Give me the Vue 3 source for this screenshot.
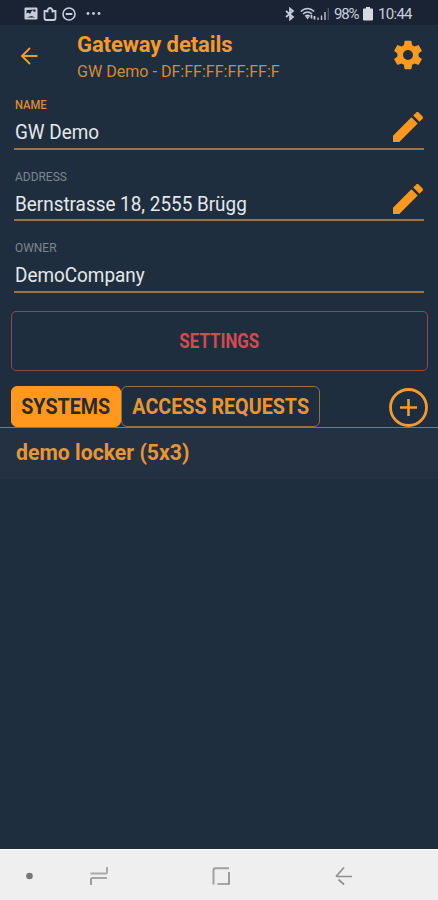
<template>
  <div class="screen">
    <div class="status">
      <div class="status-left">
        <svg width="14" height="14" viewBox="0 0 14 14">
          <path fill="#c9cedb" fill-rule="evenodd" d="M1.500 .5h11a1 1 0 0 1 1 1v10a1 1 0 0 1-1 1h-11a1 1 0 0 1-1-1v-10a1 1 0 0 1 1-1zM2.500 3v3.500l2-1 1.500 1.500 2-3.500h1.500V5l2-.5V2.500zM2.500 10.500h9l-4-1.500z" />
        </svg>
        <svg width="14" height="14" viewBox="0 0 14 14" fill="none" stroke="#c9cedb" stroke-width="1.800">
          <path d="M4 4H1.500v7q0 2 2 2h7q2 0 2-2V4H10M4.500 5.500V3Q7-1 9.500 3v2.500" />
        </svg>
        <svg width="14" height="14" viewBox="0 0 14 14" fill="none" stroke="#c9cedb" stroke-width="1.600">
          <circle cx="7" cy="7" r="6" />
          <path d="M3.700 7h6.600" stroke-width="2" />
        </svg>
        <svg class="dots" width="16" height="14" viewBox="0 0 16 14" fill="#c9cedb">
          <circle cx="2" cy="6.500" r="1.400" />
          <circle cx="7.500" cy="6.500" r="1.400" />
          <circle cx="13" cy="6.500" r="1.400" />
        </svg>
      </div>
      <div class="status-right">
        <svg width="10" height="14" viewBox="0 0 10 14" fill="none" stroke="#c9cedb" stroke-width="1.700">
          <path d="M1 4l7 6L5 12.500v-11L8 4 1 10" />
        </svg>
        <svg class="wifi" width="17" height="14" viewBox="0 0 17 14" fill="none" stroke="#c9cedb" stroke-width="1.600">
          <path d="M.8 4.500Q7.500-1.500 14.200 4.500M3 7q4.500-4 9 0M5.200 9.300q2.300-2 4.600 0" />
          <path d="M5.500 9.500h4L7.500 12.500z" fill="#c9cedb" stroke="none" />
          <path d="M11.500 8v3.500M14.500 9v3.500" stroke-width="1.800" />
        </svg>
        <svg class="signal" width="12" height="14" viewBox="0 0 12 14" fill="none" stroke="#c9cedb" stroke-width="1.300">
          <path d="M1 13v-2.500M4.500 13V8.500M8 13V5" />
          <path d="M11.300 13V1" stroke="#525a6b" />
        </svg>
        <span class="battery-text">98%</span>
        <svg class="battery" width="10" height="14" viewBox="0 0 10 14">
          <path d="M3 0h4v1.500h2q1 0 1 1V12.500q0 1-1 1H1q-1 0-1-1V2.500q0-1 1-1h2z" fill="#d5d9e3" />
        </svg>
        <span class="clock">10:44</span>
      </div>
    </div>

    <header class="header">
      <svg class="back" width="18" height="18" viewBox="0 0 18 18" fill="none" stroke="#f79a26" stroke-width="1.900">
        <path d="M17.500 9H1.800M10 1L2 9l8 8" />
      </svg>
      <div class="titles">
        <div class="title"><span>Gateway details</span></div>
        <div class="subtitle"><span>GW Demo - DF:FF:FF:FF:FF:F</span></div>
      </div>
      <svg class="gear" width="34" height="34" viewBox="0 0 24 24" fill="#f99a20">
        <path d="M19.430 12.980c.04-.32.07-.64.07-.98s-.03-.66-.07-.98l2.110-1.650c.19-.15.24-.42.12-.64l-2-3.460c-.12-.22-.39-.3-.61-.22l-2.490 1c-.52-.4-1.080-.73-1.690-.98l-.38-2.650C14.460 2.180 14.250 2 14 2h-4c-.25 0-.46.18-.49.42l-.38 2.650c-.61.25-1.170.59-1.690.98l-2.490-1c-.23-.09-.49 0-.61.22l-2 3.460c-.13.22-.07.49.12.64l2.110 1.650c-.04.32-.07.65-.07.98s.03.66.07.98l-2.110 1.650c-.19.15-.24.42-.12.64l2 3.460c.12.22.39.3.61.22l2.490-1c.52.4 1.080.73 1.690.98l.38 2.650c.03.24.24.42.49.42h4c.25 0 .46-.18.49-.42l.38-2.650c.61-.25 1.170-.59 1.690-.98l2.490 1c.23.09.49 0 .61-.22l2-3.460c.12-.22.07-.49-.12-.64l-2.110-1.650zM12 15.500c-1.930 0-3.500-1.570-3.500-3.500s1.570-3.500 3.500-3.500 3.500 1.570 3.500 3.500-1.570 3.500-3.500 3.500z" />
      </svg>
    </header>

    <section class="fields">
      <div v-for="field in fields" :key="field.id" class="field" :class="field.id">
        <div class="text">
          <div class="label"><span>{{ field.label }}</span></div>
          <div class="value"><span>{{ field.value }}</span></div>
        </div>
        <svg v-if="field.editable" class="pencil" width="40" height="40" viewBox="0 0 24 24" fill="#ff981c">
          <path d="M3 17.250V21h3.750L17.810 9.940l-3.750-3.750L3 17.250zM20.710 7.040c.39-.39.39-1.020 0-1.410l-2.340-2.340c-.39-.39-1.020-.39-1.410 0l-1.830 1.830 3.750 3.750 1.830-1.830z" />
        </svg>
      </div>
    </section>

    <button class="settings" type="button"><span>SETTINGS</span></button>

    <nav class="tabs">
      <button
        v-for="tab in tabs"
        :key="tab.id"
        type="button"
        class="tab"
        :class="[tab.id, { active: tab.id === activeTab }]"
        @click="activeTab = tab.id"
      >
        <span>{{ tab.label }}</span>
      </button>
      <svg class="add" width="40" height="40" viewBox="0 0 40 40" fill="none" stroke="#f39a30">
        <circle cx="19.500" cy="20.500" r="18" stroke-width="2.800" />
        <path d="M19.500 12v17M11 20.500h17" stroke-width="2.600" />
      </svg>
    </nav>

    <main class="list">
      <div class="row"><span>demo locker (5x3)</span></div>
    </main>

    <footer class="navbar">
      <svg width="438" height="50" viewBox="0 0 438 50" fill="none" stroke="#8f8f8f" stroke-width="1.700">
        <circle cx="29.500" cy="26" r="3.300" fill="#777" stroke="none" />
        <path d="M90.500 23.500h15.200q1.300 0 1.300-1.300V17" stroke="#aaa" stroke-width="2" />
        <path d="M107 28H92.300q-1.300 0-1.300 1.300V35" />
        <path d="M229 18.300h-13.500q-2 0-2 2V34.500" stroke="#a0a0a0" stroke-width="2" />
        <path d="M229 22v12h-11.500" />
        <path d="M352 26.500h-15.500M344 17.500L336 26.500M338.500 29.500l5.500 5" />
      </svg>
    </footer>
  </div>
</template>

<script setup>
import { ref } from 'vue';

const fields = [
  { id: 'name', label: 'NAME', value: 'GW Demo', editable: true },
  { id: 'address', label: 'ADDRESS', value: 'Bernstrasse 18, 2555 Brügg', editable: true },
  { id: 'owner', label: 'OWNER', value: 'DemoCompany', editable: false },
];

const tabs = [
  { id: 'systems', label: 'SYSTEMS' },
  { id: 'requests', label: 'ACCESS REQUESTS' },
];

const activeTab = ref('systems');
</script>

<style>
  body {
    margin: 0;
    background: #1f2e3e;
  }
</style>

<style scoped>
  .screen {
    width: 438px;
    height: 900px;
    display: flex;
    flex-direction: column;
    background: #1f2e3e;
    font-family: Roboto, "Liberation Sans", sans-serif;
    overflow: hidden;
    white-space: nowrap;
  }

  .screen svg {
    display: block;
    flex: none;
  }

  button {
    font-family: inherit;
    padding: 0;
    box-sizing: border-box;
    background: transparent;
  }

  /* condensed lettering */
  .subtitle span,
  .label span,
  .value span,
  .settings span,
  .tab span,
  .row span {
    display: inline-block;
    transform: scaleX(0.945);
    transform-origin: left;
  }

  .status {
    height: 25px;
    flex: none;
    box-sizing: border-box;
    padding: 2px 25px 0 24px;
    display: flex;
    align-items: center;
    justify-content: space-between;
    background: #1a2333;
    color: #c9cedb;
    font-size: 15px;
  }

  .status-left,
  .status-right {
    display: flex;
    align-items: center;
  }

  .status-left {
    gap: 5px;
  }

  .dots {
    margin-left: 5px;
  }

  .wifi {
    margin-left: 5px;
  }

  .battery-text {
    margin-left: 5px;
    width: 26px;
    letter-spacing: -1.2px;
  }

  .battery {
    margin-left: 3px;
  }

  .clock {
    margin-left: 5px;
    width: 35px;
    letter-spacing: -0.7px;
  }

  .header {
    height: 53px;
    flex: none;
    box-sizing: border-box;
    display: flex;
    align-items: flex-start;
    padding: 7px 13px 0 20px;
  }

  .back {
    margin-top: 15px;
  }

  .titles {
    flex: 1;
    margin-left: 39px;
  }

  .title {
    font-size: 22px;
    line-height: 26px;
    font-weight: 700;
    color: #f59a2b;
    letter-spacing: -0.1px;
  }

  .subtitle {
    font-size: 17px;
    line-height: 27px;
    color: #d28b3a;
  }

  .gear {
    margin-top: 6px;
  }

  .fields {
    padding: 0 14px;
    flex: none;
  }

  .field {
    height: 71.5px;
    box-sizing: border-box;
    border-bottom: 2px solid #9a7343;
    display: flex;
    justify-content: space-between;
  }

  .text {
    padding-left: 1px;
  }

  .label {
    padding-top: 19px;
    font-size: 13px;
    line-height: 16px;
    color: #7b8790;
  }

  .label span {
    transform: scaleX(0.92);
  }

  .name .label {
    color: #d88c37;
    font-weight: 500;
  }

  .name .label span {
    transform: scaleX(0.86);
  }

  .value {
    padding-top: 6px;
    font-size: 20px;
    line-height: 26px;
    color: #e4e8ec;
  }

  .pencil {
    margin: 29px -4px 0 0;
  }

  .settings {
    height: 60px;
    flex: none;
    margin: 18.500px 10px 0 11px;
    border: 1.500px solid #98434f;
    border-radius: 5px;
    color: #d34a50;
    font-size: 20px;
    font-weight: 700;
  }

  .settings span {
    transform: scaleX(0.845);
    transform-origin: center;
  }

  .tabs {
    height: 57px;
    flex: none;
    box-sizing: border-box;
    padding: 0 9px 0 11px;
    display: flex;
    align-items: flex-end;
    border-bottom: 1.500px solid #8c754f;
  }

  .tab {
    height: 41px;
    border: 1.500px solid #94703f;
    border-radius: 6px;
    color: #e79635;
    font-size: 22px;
    font-weight: 700;
  }

  .tab span {
    transform: scaleX(0.895);
    transform-origin: center;
  }

  .systems {
    width: 110px;
  }

  .requests {
    width: 199px;
  }

  .tab.active {
    background: #ff981c;
    border-color: #ff981c;
    color: #2b2b2d;
  }

  .add {
    margin-left: auto;
  }

  .list {
    flex: 1;
  }

  .row {
    height: 51px;
    box-sizing: border-box;
    padding: 11px 16px 0;
    background: #233143;
    color: #e79635;
    font-size: 22px;
    line-height: 28px;
    font-weight: 700;
  }

  .row span {
    transform: scaleX(0.965);
  }

  .navbar {
    height: 51px;
    flex: none;
    box-sizing: border-box;
    border-top: 1px solid #fff;
    background: #efefef;
  }
</style>
